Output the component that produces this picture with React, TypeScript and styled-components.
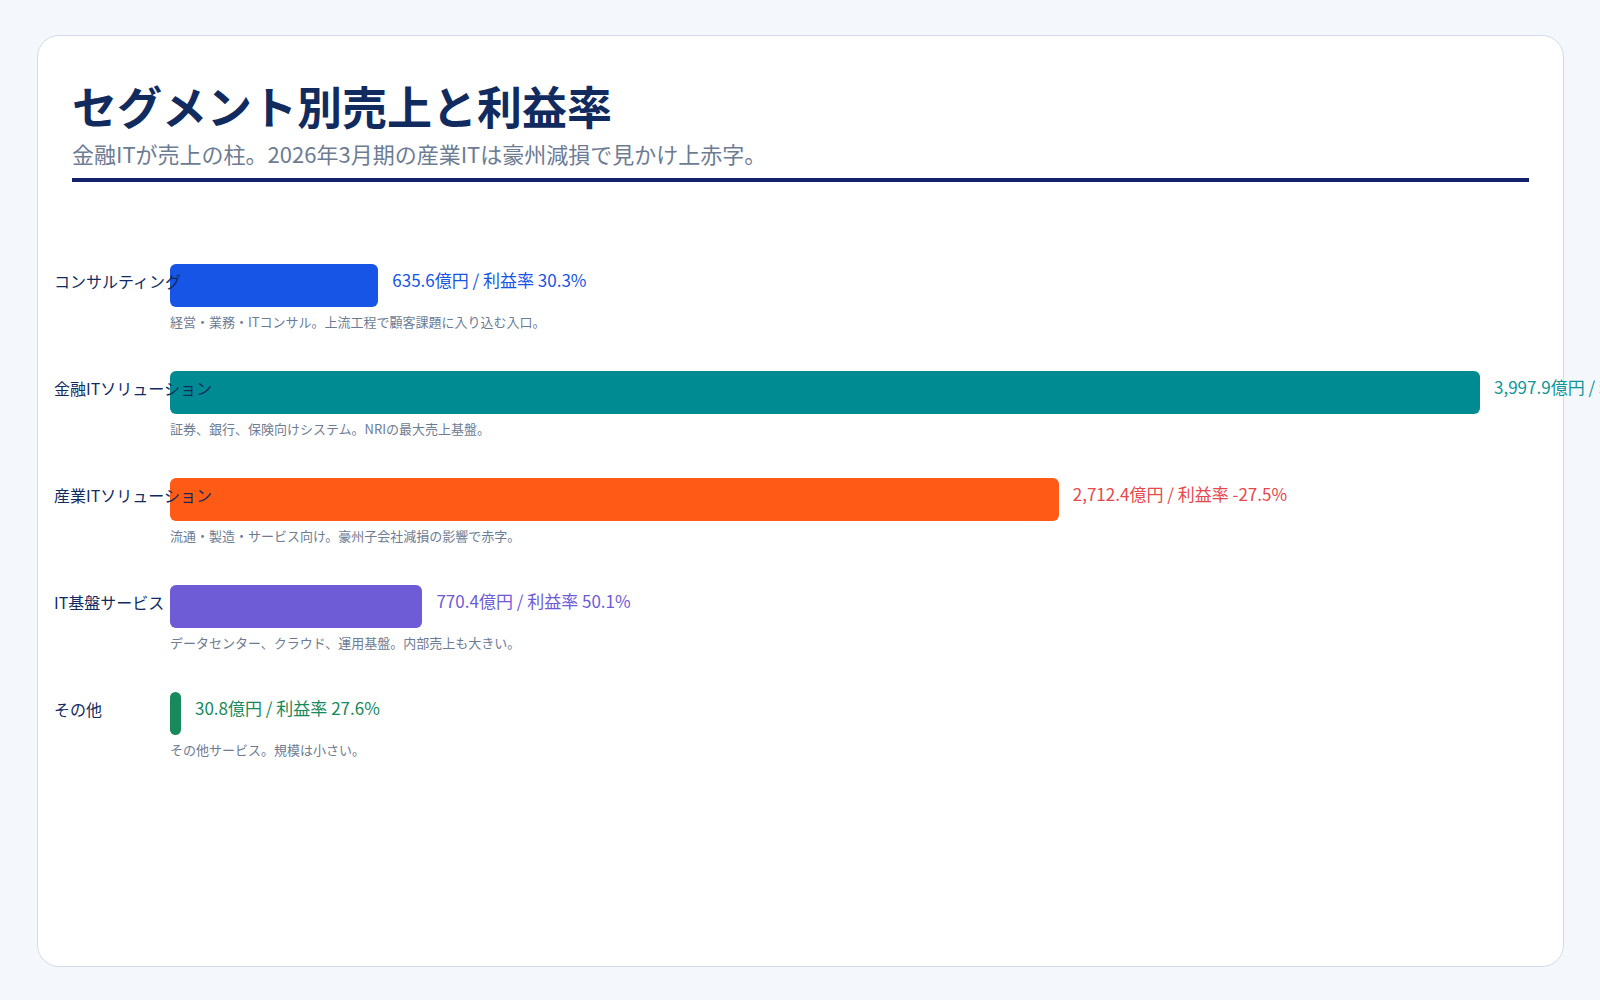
import React from "react";
import styled, { createGlobalStyle } from "styled-components";

const G = createGlobalStyle`
  body { margin:0; background:#f4f7fb; font-family:"Noto Sans CJK JP","Noto Sans",sans-serif; }
`;
const Page = styled.div`padding:35px 36px 0 37px; height:1000px; box-sizing:border-box;`;
const Card = styled.div`
  background:#fff; border:1px solid #d3dcea; border-radius:22px; height:932px; box-sizing:border-box;
  padding:40px 34px 0 34px;
`;
const Title = styled.h1`margin:0; font-size:45px; line-height:60px; font-weight:700; color:#112b5f;`;
const Sub = styled.p`margin:2px 0 0; font-size:22px; line-height:30px; color:#6d7c93;`;
const Rule = styled.div`height:4px; background:#13236b; margin-top:10px;`;
const Chart = styled.div`margin:82px 0 0 -18px; display:flex; flex-direction:column; gap:40px;`;
const Row = styled.div`display:grid; grid-template-columns:116px 1310px; grid-template-rows:43px auto; row-gap:6px;`;
const Label = styled.div`font-size:16px; color:#112b5f; white-space:nowrap; align-self:center; margin-top:-10px; position:relative; z-index:1;`;
const BarLine = styled.div`display:flex; align-items:center; gap:14px;`;
const Bar = styled.div<{ $c: string }>`height:43px; background:${p => p.$c}; border-radius:6px; flex:none;`;
const Val = styled.div<{ $c: string }>`font-size:17px; color:${p => p.$c}; white-space:nowrap; margin-top:-12px;`;
const Desc = styled.div`grid-column:2; font-size:13px; line-height:18px; color:#6d7c93;`;

const data = [
  { n: "コンサルティング", v: 635.6, m: "30.3%", c: "#1655e6", t: "#1655e6", d: "経営・業務・ITコンサル。上流工程で顧客課題に入り込む入口。" },
  { n: "金融ITソリューション", v: 3997.9, m: "35.0%", c: "#008b93", t: "#0f9598", d: "証券、銀行、保険向けシステム。NRIの最大売上基盤。" },
  { n: "産業ITソリューション", v: 2712.4, m: "-27.5%", c: "#ff5a16", t: "#e5484d", d: "流通・製造・サービス向け。豪州子会社減損の影響で赤字。" },
  { n: "IT基盤サービス", v: 770.4, m: "50.1%", c: "#6e5bd6", t: "#6e5bd6", d: "データセンター、クラウド、運用基盤。内部売上も大きい。" },
  { n: "その他", v: 30.8, m: "27.6%", c: "#17895a", t: "#17895a", d: "その他サービス。規模は小さい。" },
];

export default function App() {
  return (
    <Page>
      <G />
      <Card>
        <Title>セグメント別売上と利益率</Title>
        <Sub>金融ITが売上の柱。2026年3月期の産業ITは豪州減損で見かけ上赤字。</Sub>
        <Rule />
        <Chart>
          {data.map(r => (
            <Row key={r.n}>
              <Label>{r.n}</Label>
              <BarLine>
                <Bar $c={r.c} style={{ width: Math.max(11, (r.v / 3997.9) * 1310) }} />
                <Val $c={r.t}>{r.v.toLocaleString("en-US", { minimumFractionDigits: 1 })}億円 / 利益率 {r.m}</Val>
              </BarLine>
              <Desc>{r.d}</Desc>
            </Row>
          ))}
        </Chart>
      </Card>
    </Page>
  );
}
